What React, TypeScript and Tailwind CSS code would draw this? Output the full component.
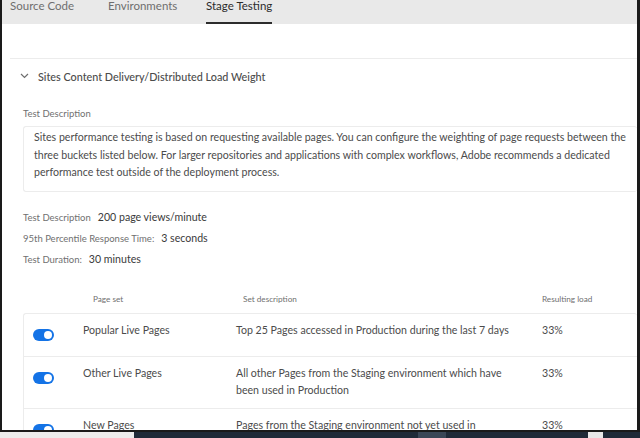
import React from "react";

const FONT = "font-['Lato','Open_Sans',sans-serif]";

const rows = [
  {
    name: "Popular Live Pages",
    desc: "Top 25 Pages accessed in Production during the last 7 days",
    load: "33%",
    h: "h-[42px]",
  },
  {
    name: "Other Live Pages",
    desc: "All other Pages from the Staging environment which have been used in Production",
    load: "33%",
    h: "h-[52px]",
  },
  {
    name: "New Pages",
    desc: "Pages from the Staging environment not yet used in Production",
    load: "33%",
    h: "h-[52px]",
  },
];

function Toggle() {
  return (
    <div className="w-[21px] h-[12px] rounded-full bg-[#1473e6] flex items-center justify-end pr-[2px]">
      <div className="w-[8px] h-[8px] rounded-full bg-white" />
    </div>
  );
}

function Stat({ k, v }: { k: string; v: string }) {
  return (
    <div className="h-[21px] flex items-center">
      <span className="text-[9.5px] text-[#707070]">{k}</span>
      <span className="ml-[7px] text-[10.6px] text-[#3a3a3a]">{v}</span>
    </div>
  );
}

export default function App() {
  return (
    <div className={`w-[640px] h-[438px] overflow-hidden bg-white ${FONT} flex flex-col`}>
      <div className="h-[432px] shrink-0 border-l-2 border-b-2 border-r-[3px] border-[#1a1a1a] overflow-hidden flex flex-col">
        {/* tabs */}
        <div className="h-[24px] shrink-0 bg-[#e9e9e9] flex pl-[8px] text-[11.5px] leading-[17px]">
          <div className="w-[98px] -mt-[3px] text-[#6e6e6e]">Source Code</div>
          <div className="w-[98px] -mt-[3px] text-[#6e6e6e]">Environments</div>
          <div className="h-full flex flex-col text-[#2c2c2c]">
            <span className="-mt-[3px]">Stage Testing</span>
            <div className="flex-1" />
            <div className="h-[2.5px] bg-[#2c2c2c]" />
          </div>
        </div>

        <div className="pt-[34px]">
          <div className="ml-[8px] border-t border-[#ececec]" />
          <div className="h-[36px] flex items-center pl-[18px] gap-[9px]">
            <svg width="9" height="6" viewBox="0 0 9 6" className="mt-[-2px]">
              <path d="M1 1 L4.5 4.5 L8 1" fill="none" stroke="#6e6e6e" strokeWidth="1.2" />
            </svg>
            <span className="text-[10.8px] text-[#4b4b4b] font-medium">
              Sites Content Delivery/Distributed Load Weight
            </span>
          </div>

          <div className="pl-[21px]">
            <div className="mt-[12px] text-[9.5px] text-[#707070] leading-[14px]">Test Description</div>
            <div className="mt-[5px] border border-[#ececec] rounded-[3px] border-r-0 pl-[10px] pr-[10px] pt-[2px] pb-[9px] text-[10.6px] leading-[17.5px] text-[#4b4b4b]">
              Sites performance testing is based on requesting available pages. You can configure the weighting of page
              requests between the three buckets listed below. For larger repositories and applications with complex
              workflows, Adobe recommends a dedicated performance test outside of the deployment process.
            </div>

            <div className="mt-[16px]">
              <Stat k="Test Description" v="200 page views/minute" />
              <Stat k="95th Percentile Response Time:" v="3 seconds" />
              <Stat k="Test Duration:" v="30 minutes" />
            </div>

            <div className="mt-[19px] h-[20px] flex items-center text-[8.2px] text-[#707070]">
              <div className="w-[220px] pl-[70px]">Page set</div>
              <div className="w-[299px]">Set description</div>
              <div>Resulting load</div>
            </div>

            <div className="mt-[3px] border border-r-0 border-[#ececec] rounded-[3px]">
              {rows.map((r, i) => (
                <div
                  key={r.name}
                  className={`${r.h} flex items-start ${i > 0 ? "border-t border-[#ececec]" : ""}`}
                >
                  <div className="w-[59px] pl-[9px] pt-[15px]">
                    <Toggle />
                  </div>
                  <div className="w-[153px] pt-[8px] text-[10.6px] leading-[17px] text-[#4b4b4b]">{r.name}</div>
                  <div className="w-[306px] pt-[8px] pr-[22px] text-[10.6px] leading-[17px] text-[#4b4b4b]">
                    {r.desc}
                  </div>
                  <div className="pt-[8px] text-[10.6px] leading-[17px] text-[#4b4b4b]">{r.load}</div>
                </div>
              ))}
            </div>
          </div>
        </div>
      </div>

      {/* taskbar strip */}
      <div className="flex-1 flex">
        <div className="w-[134px] bg-[#ececec]" />
        <div className="w-[284px] bg-[#1f2a38]" />
        <div className="w-[28px] bg-[#3a4656]" />
        <div className="w-[142px] bg-[#1f2a38]" />
        <div className="w-[15px] bg-[#e8e8e8]" />
        <div className="flex-1 bg-[#1f2a38]" />
      </div>
    </div>
  );
}
